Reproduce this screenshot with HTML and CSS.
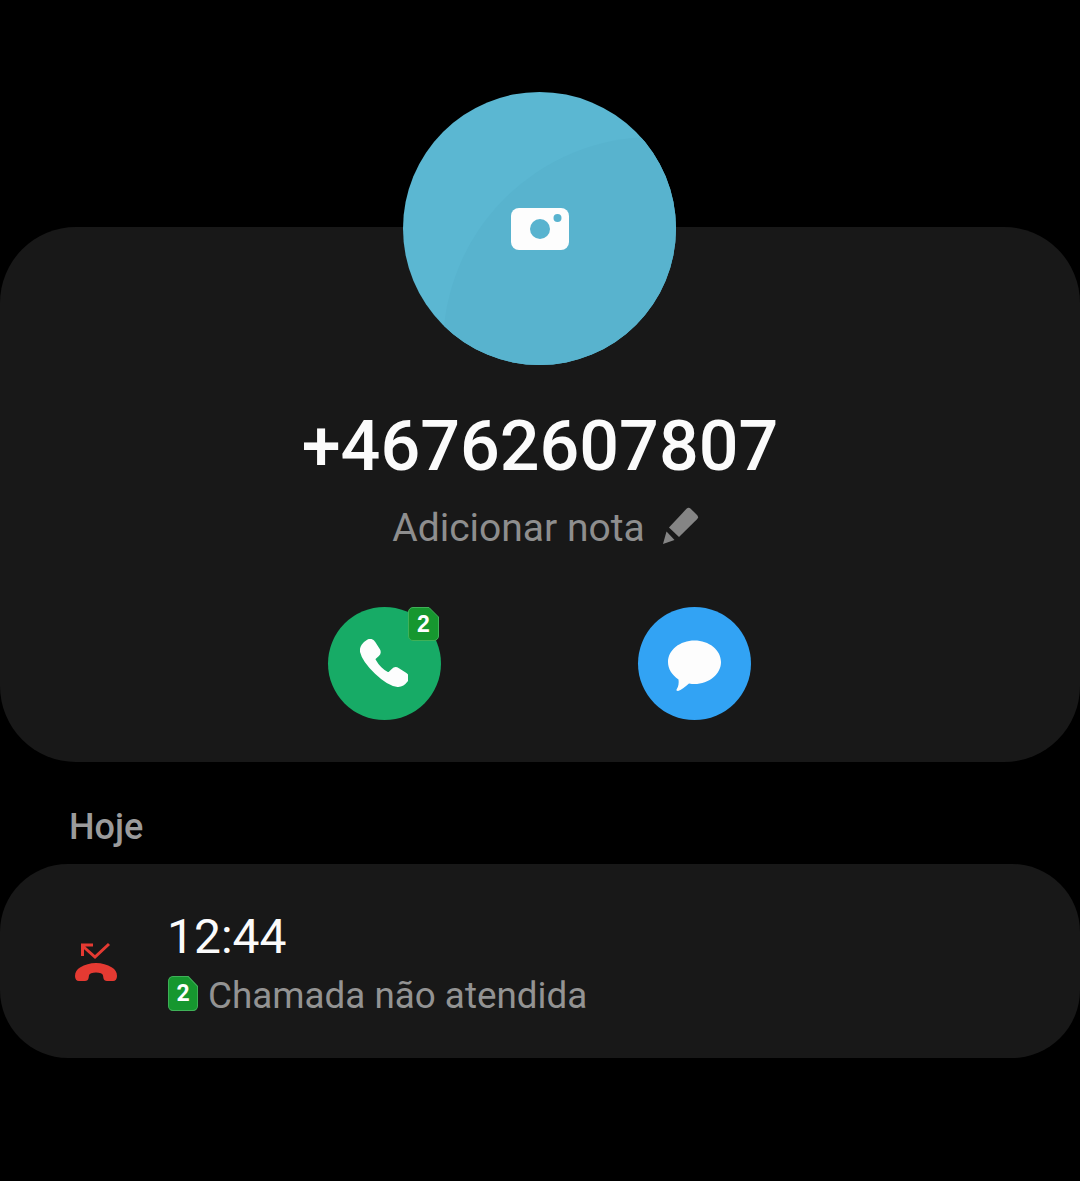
FILE: index.html
```html
<!DOCTYPE html>
<html lang="pt">
<head>
  <meta charset="UTF-8" />
  <meta name="viewport" content="width=device-width, initial-scale=1.0"/>
  <title>Detalhes da chamada</title>
  <link rel="stylesheet" href="styles.css">
</head>
<body>

  <section class="contact-card">
    <div class="avatar">
      <svg class="avatar-icon" width="58" height="42" viewBox="0 0 58 42">
        <path fill="#fdfdfd" d="M8 0H50a8 8 0 0 1 8 8V34a8 8 0 0 1-8 8H8a8 8 0 0 1-8-8V8a8 8 0 0 1 8-8Z"/>
        <circle cx="29" cy="21" r="10" fill="#58b3cf"/>
        <circle cx="46.500" cy="10" r="4" fill="#58b3cf"/>
      </svg>
    </div>

    <h1 class="number">+46762607807</h1>

    <div class="note">
      <span>Adicionar nota</span>
      <svg class="note-icon" width="38" height="38" viewBox="0 0 38 38">
        <path fill="#858585" d="M25.500 1.800a3 3 0 0 1 4.200 0l6.300 6.300a3 3 0 0 1 0 4.200L18 30 8 20.500Z"/>
        <path fill="#858585" d="M5.500 24.500 13.500 33 2 37Z"/>
      </svg>
    </div>

    <div class="actions">
      <button class="action call">
        <svg class="handset" width="48" height="48" viewBox="0 0 47 47">
          <path fill="#fdfdfd" stroke="#fdfdfd" stroke-width="2" stroke-linejoin="round" d="M7.500 1.500C9.800.3 12.500.8 13.800 3l4.700 7.300c1.100 1.900.8 4.200-.7 5.600l-3 2.700c-.6.600-.7 1.400-.3 2.100 2.500 4.400 7 9.600 12.300 12.400.8.400 1.600.3 2.200-.3l2.800-2.800c1.600-1.600 4-1.700 5.800-.6l7.300 4.800c2.300 1.500 2.800 4.300 1.300 6.400-2.200 3-5.500 5.600-9.500 5.300C25 45.600 3.600 24 1 12.600.1 8.200 3.600 3.600 7.500 1.500Z"/>
        </svg>
        <span class="sim sim-badge">
          <svg class="sim-shape" viewBox="0 0 31 34" preserveAspectRatio="none">
            <path fill="#16972f" stroke="#3fb158" d="M5 .5H21L30.500 10V29a4.500 4.500 0 0 1-4.500 4.500H5A4.500 4.500 0 0 1 .5 29V5A4.500 4.500 0 0 1 5 .5Z"/>
          </svg>
          <span class="sim-number">2</span>
        </span>
      </button>
      <button class="action message">
        <svg class="bubble" width="53" height="52" viewBox="0 0 53 52">
          <path fill="#fdfdfd" d="M26.500.5C41 .5 53 10 53 22S41 44 26.500 44C25 44 23 44 21 43.500 17 47 13 50 10 51 8.500 51 8 50 8.800 49 10.500 46.500 11 43 10.500 39.500 4 35 0 29 0 22 0 10 12 .5 26.500.5Z"/>
        </svg>
      </button>
    </div>
  </section>

  <h2 class="day">Hoje</h2>

  <section class="log-card">
    <svg class="missed" width="46" height="42" viewBox="0 0 46 42">
      <path fill="none" stroke="#e53a32" stroke-width="3" d="M8 3H20M9.500 3V14M9 3.500 22 15 36 2"/>
      <path fill="#e53a32" d="M2 34C2 30 4 27.500 7 25.500 12 22.500 17 21 23 21s11 1.500 16 4.500c3 2 5 4.500 5 8.500 0 3-1.500 5-4 5h-6c-2 0-3.300-1-3.600-3l-.3-2c-.2-1.500-1-2.300-2.200-2.700-1.500-.5-3.200-.8-4.900-.8s-3.400.3-4.900.8c-1.200.4-2 1.200-2.200 2.700l-.3 2c-.3 2-1.600 3-3.600 3H6c-2.500 0-4-2-4-5Z"/>
    </svg>
    <div class="log-text">
      <div class="log-time">12:44</div>
      <div class="log-status">
        <span class="sim sim-inline">
          <svg class="sim-shape" viewBox="0 0 31 34" preserveAspectRatio="none">
            <path fill="#16972f" stroke="#3fb158" d="M5 .5H21L30.500 10V29a4.500 4.500 0 0 1-4.500 4.500H5A4.500 4.500 0 0 1 .5 29V5A4.500 4.500 0 0 1 5 .5Z"/>
          </svg>
          <span class="sim-number">2</span>
        </span>
        <span>Chamada não atendida</span>
      </div>
    </div>
  </section>

</body>
</html>
```

FILE: styles.css
```css
body {
  background-color: #000;
  font-family: Roboto, "Noto Sans", sans-serif;
  margin: 0;
}

.contact-card {
  background: #181818;
  margin-top: 227px;
  height: 535px;
  border-radius: 76px;
  display: flex;
  flex-direction: column;
  align-items: center;
}

.avatar {
  width: 273px;
  height: 273px;
  margin-top: -135px;
  margin-right: 1px;
  border-radius: 50%;
  flex-shrink: 0;
  display: flex;
  align-items: center;
  justify-content: center;
  position: relative;
  overflow: hidden;
  background: #5bb7d2;
}

/* the faint arc across the top left */
.avatar::before {
  content: "";
  position: absolute;
  left: 40px;
  top: 45px;
  width: 420px;
  height: 420px;
  border-radius: 50%;
  background: #58b3ce;
}

.avatar-icon {
  position: relative;
}

.number {
  margin: 40px 0 0;
  font-size: 70px;
  line-height: 82px;
  font-weight: 500;
  color: #fbfbfb;
}

.note {
  margin-top: 19px;
  margin-left: 11px;
  display: flex;
  align-items: center;
  gap: 16px;
  font-size: 39px;
  line-height: 45px;
  color: #8e8e8e;
}

.note-icon {
  margin-bottom: 6px;
}

.actions {
  margin-top: 56px;
  margin-right: 1px;
  display: flex;
  gap: 197px;
}

.action {
  width: 113px;
  height: 113px;
  padding: 0;
  border: none;
  border-radius: 50%;
  display: flex;
  align-items: center;
  justify-content: center;
  position: relative;
}

.call { background: #17ab66; }
.message { background: #32a3f4; }

.handset {
  margin: 0 1px 1px 0;
}

.bubble {
  margin-top: 5px;
}

.sim {
  display: flex;
  align-items: center;
  justify-content: center;
  color: #fff;
  font-weight: 700;
  font-size: 23px;
  position: relative;
}

.sim-shape {
  position: absolute;
  inset: 0;
  width: 100%;
  height: 100%;
}

.sim-number {
  position: relative;
}

.sim-badge {
  position: absolute;
  top: 0;
  right: 2px;
  width: 31px;
  height: 34px;
}

.sim-inline {
  width: 30px;
  height: 35px;
  margin-top: -4px;
}

.day {
  margin: 45px 0 0 69px;
  font-size: 36px;
  line-height: 40px;
  font-weight: 500;
  color: #9b9b9b;
}

.log-card {
  background: #181818;
  margin-top: 17px;
  height: 194px;
  border-radius: 68px;
  display: flex;
  align-items: center;
  padding-left: 73px;
  gap: 49px;
}

.missed {
  margin-top: 3px;
}

.log-text {
  margin-top: 4px;
}

.log-time {
  margin-left: -1px;
  font-size: 48px;
  line-height: 56px;
  color: #fbfbfb;
}

.log-status {
  margin-top: 9px;
  display: flex;
  align-items: center;
  gap: 10px;
  font-size: 36.800px;
  line-height: 44px;
  color: #939393;
}
```
